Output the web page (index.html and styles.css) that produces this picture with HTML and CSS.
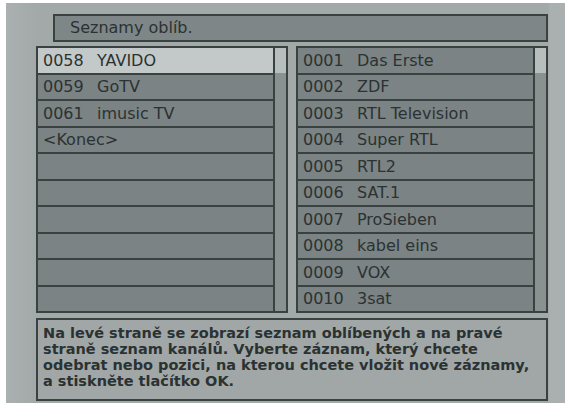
FILE: index.html
```html
<!DOCTYPE html>
<html lang="cs">
<head>
    <meta charset="UTF-8">
    <meta name="viewport" content="width=device-width, initial-scale=1.0">
    <title>Seznamy oblíb.</title>
    <link rel="stylesheet" href="styles.css">
</head>
<body>
    <div class="screen">
        <div class="title-bar">Seznamy oblíb.</div>

        <div class="lists">
            <div class="list">
                <div class="rows">
                    <div class="row selected"><span class="num">0058</span><span class="name">YAVIDO</span></div>
                    <div class="row"><span class="num">0059</span><span class="name">GoTV</span></div>
                    <div class="row"><span class="num">0061</span><span class="name">imusic TV</span></div>
                    <div class="row"><span class="name">&lt;Konec&gt;</span></div>
                    <div class="row"></div>
                    <div class="row"></div>
                    <div class="row"></div>
                    <div class="row"></div>
                    <div class="row"></div>
                    <div class="row"></div>
                </div>
                <div class="scrollbar"><div class="thumb"></div></div>
            </div>

            <div class="list">
                <div class="rows">
                    <div class="row"><span class="num">0001</span><span class="name">Das Erste</span></div>
                    <div class="row"><span class="num">0002</span><span class="name">ZDF</span></div>
                    <div class="row"><span class="num">0003</span><span class="name">RTL Television</span></div>
                    <div class="row"><span class="num">0004</span><span class="name">Super RTL</span></div>
                    <div class="row"><span class="num">0005</span><span class="name">RTL2</span></div>
                    <div class="row"><span class="num">0006</span><span class="name">SAT.1</span></div>
                    <div class="row"><span class="num">0007</span><span class="name">ProSieben</span></div>
                    <div class="row"><span class="num">0008</span><span class="name">kabel eins</span></div>
                    <div class="row"><span class="num">0009</span><span class="name">VOX</span></div>
                    <div class="row"><span class="num">0010</span><span class="name">3sat</span></div>
                </div>
                <div class="scrollbar"><div class="thumb"></div></div>
            </div>
        </div>

        <div class="help">
            Na levé straně se zobrazí seznam oblíbených a na pravé<br>
            straně seznam kanálů. Vyberte záznam, který chcete<br>
            odebrat nebo pozici, na kterou chcete vložit nové záznamy,<br>
            a stiskněte tlačítko OK.
        </div>
    </div>
</body>
</html>
```

FILE: styles.css
```css
body {
    margin: 0;
    background-color: #fff;
    font-family: "DejaVu Sans", Verdana, sans-serif;
    color: #2b3232;
}

.screen {
    margin: 3px 0 0 6px;
    width: 559px;
    height: 400px;
    box-sizing: border-box;
    padding: 11px 0 0 30px;
    background: linear-gradient(to right, #abb1b1 0, #a3a9a9 30px, #a3a9a9 542px, #aab0b0 544px);
    display: flex;
    flex-direction: column;
}

.title-bar {
    margin-left: 17px;
    width: 495px;
    height: 28px;
    box-sizing: border-box;
    border: 2px solid #394141;
    background-color: #7e8687;
    font-size: 16px;
    line-height: 24px;
    padding-left: 15px;
}

.lists {
    display: flex;
    gap: 8px;
    margin-top: 4px;
    height: 267px;
}

.list {
    width: 252px;
    box-sizing: border-box;
    border: 2px solid #394141;
    display: flex;
}

.rows {
    flex: 1;
    display: flex;
    flex-direction: column;
}

.row {
    flex: 1;
    display: flex;
    align-items: center;
    padding-left: 5px;
    background-color: #7b8384;
    font-size: 16px;
    white-space: nowrap;
}

.row + .row {
    border-top: 2px solid #394141;
}

.row.selected {
    background-color: #c3c9c9;
}

.num {
    width: 54px;
}

.scrollbar {
    width: 11px;
    border-left: 2px solid #394141;
    background-color: #899191;
}

.thumb {
    height: 25px;
    background-color: #b8bebe;
}

.help {
    margin-top: 5px;
    width: 512px;
    height: 83px;
    box-sizing: border-box;
    border: 2px solid #394141;
    background-color: #a1a7a7;
    padding: 5px 0 0 5px;
    font-size: 14.5px;
    font-weight: bold;
    line-height: 16px;
    white-space: nowrap;
}
```
